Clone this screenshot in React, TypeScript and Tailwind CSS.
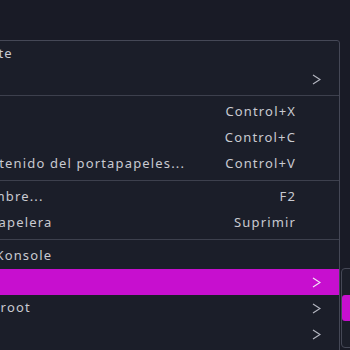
import React from 'react';

type Item =
  | { kind: 'item'; label: string; shortcut?: string; submenu?: boolean; active?: boolean; h?: string }
  | { kind: 'sep' };

const items: Item[] = [
  { kind: 'item', label: 'Abrir con Kate', h: 'h-[25px]' },
  { kind: 'item', label: 'Abrir con', submenu: true },
  { kind: 'sep' },
  { kind: 'item', label: 'Cortar', shortcut: 'Control+X' },
  { kind: 'item', label: 'Copiar', shortcut: 'Control+C' },
  { kind: 'item', label: 'Pegar el contenido del portapapeles...', shortcut: 'Control+V' },
  { kind: 'sep' },
  { kind: 'item', label: 'Cambiar nombre...', shortcut: 'F2' },
  { kind: 'item', label: 'Mover a la papelera', shortcut: 'Suprimir' },
  { kind: 'sep' },
  { kind: 'item', label: 'Ejecutar en Konsole' },
  { kind: 'item', label: 'Acciones', submenu: true, active: true },
  { kind: 'item', label: 'Editar como root', submenu: true },
  { kind: 'item', label: 'Compartir', submenu: true },
  { kind: 'item', label: 'Propiedades' },
];

function Chevron({ active }: { active?: boolean }) {
  return (
    <svg width="9" height="11" viewBox="0 0 9 11" className="block">
      <polyline
        points="1,1 8,5.5 1,10"
        fill="none"
        stroke={active ? '#f4e6f6' : '#b4b6c0'}
        strokeWidth="1.2"
      />
    </svg>
  );
}

export default function App() {
  return (
    <div
      className="relative h-[350px] w-[350px] overflow-hidden bg-[#191b26] text-[13px] tracking-[1.15px] text-[#c9cad1]"
      style={{ fontFamily: '"Noto Sans", "Open Sans", sans-serif' }}
    >
      <div className="mt-[40px] ml-[-120px] w-[460px] border border-[#454856] rounded-tr-[3px] bg-[#1b1e29]">
        {items.map((it, i) =>
          it.kind === 'sep' ? (
            <div key={i} className="py-[3px]">
              <div className="h-px bg-[#3d404d]" />
            </div>
          ) : (
            <div
              key={i}
              className={`flex items-center ${it.h ?? 'h-[26px]'} pl-[29px] pr-[18px] ${
                it.active ? 'bg-[#c70fcf] text-white' : ''
              }`}
            >
              <span className="flex-1 whitespace-nowrap">{it.label}</span>
              {it.shortcut && <span className="whitespace-nowrap">{it.shortcut}</span>}
              <span className="ml-[16px] flex w-[9px] justify-center">
                {it.submenu && <Chevron active={it.active} />}
              </span>
            </div>
          )
        )}
      </div>

      {/* open submenu */}
      <div className="absolute left-[341px] top-[268px] w-[120px] rounded-[4px] border border-[#454856] bg-[#1b1e29]">
        <div className="h-[26px]" />
        <div className="h-[26px] rounded-[3px] bg-[#c70fcf]" />
        <div className="h-[26px]" />
      </div>
    </div>
  );
}
